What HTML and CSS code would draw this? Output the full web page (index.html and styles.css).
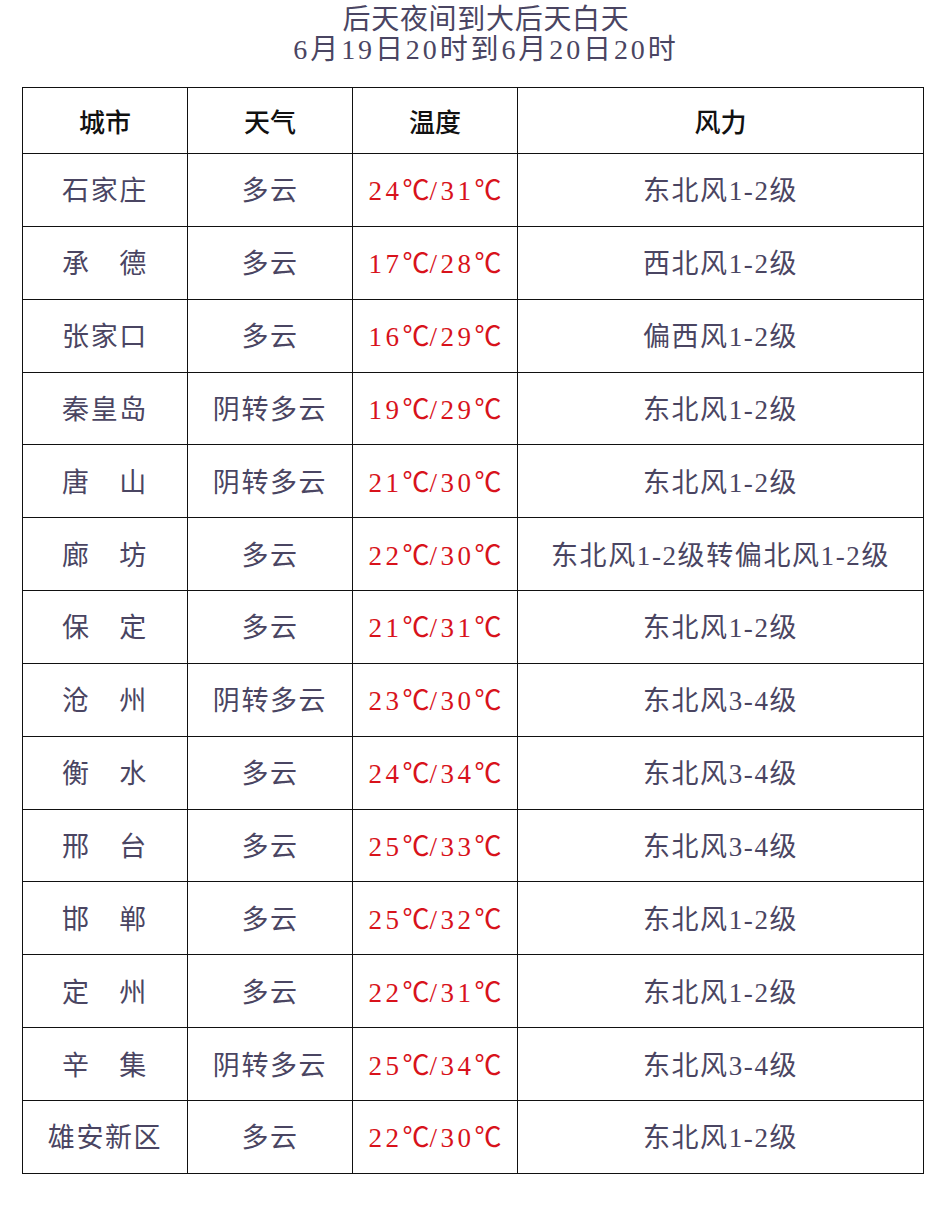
FILE: index.html
```html
<!DOCTYPE html>
<html lang="zh-CN">
<head>
<meta charset="utf-8">
<title>后天夜间到大后天白天</title>
<link rel="stylesheet" href="styles.css">
</head>
<body>
<div class="page">
  <h1 class="title">
    <span class="line l1">后天夜间到大后天白天</span>
    <span class="line l2">6月19日20时到6月20日20时</span>
  </h1>
  <table class="forecast">
    <colgroup>
      <col class="c-city"><col class="c-weather"><col class="c-temp"><col class="c-wind">
    </colgroup>
    <thead>
      <tr><th>城市</th><th>天气</th><th>温度</th><th>风力</th></tr>
    </thead>
    <tbody>
      <tr><td>石家庄</td><td>多云</td><td class="temp">24<span class="deg">℃</span>/31<span class="deg">℃</span></td><td>东北风1-2级</td></tr>
      <tr><td>承　德</td><td>多云</td><td class="temp">17<span class="deg">℃</span>/28<span class="deg">℃</span></td><td>西北风1-2级</td></tr>
      <tr><td>张家口</td><td>多云</td><td class="temp">16<span class="deg">℃</span>/29<span class="deg">℃</span></td><td>偏西风1-2级</td></tr>
      <tr><td>秦皇岛</td><td>阴转多云</td><td class="temp">19<span class="deg">℃</span>/29<span class="deg">℃</span></td><td>东北风1-2级</td></tr>
      <tr><td>唐　山</td><td>阴转多云</td><td class="temp">21<span class="deg">℃</span>/30<span class="deg">℃</span></td><td>东北风1-2级</td></tr>
      <tr><td>廊　坊</td><td>多云</td><td class="temp">22<span class="deg">℃</span>/30<span class="deg">℃</span></td><td>东北风1-2级转偏北风1-2级</td></tr>
      <tr><td>保　定</td><td>多云</td><td class="temp">21<span class="deg">℃</span>/31<span class="deg">℃</span></td><td>东北风1-2级</td></tr>
      <tr><td>沧　州</td><td>阴转多云</td><td class="temp">23<span class="deg">℃</span>/30<span class="deg">℃</span></td><td>东北风3-4级</td></tr>
      <tr><td>衡　水</td><td>多云</td><td class="temp">24<span class="deg">℃</span>/34<span class="deg">℃</span></td><td>东北风3-4级</td></tr>
      <tr><td>邢　台</td><td>多云</td><td class="temp">25<span class="deg">℃</span>/33<span class="deg">℃</span></td><td>东北风3-4级</td></tr>
      <tr><td>邯　郸</td><td>多云</td><td class="temp">25<span class="deg">℃</span>/32<span class="deg">℃</span></td><td>东北风1-2级</td></tr>
      <tr><td>定　州</td><td>多云</td><td class="temp">22<span class="deg">℃</span>/31<span class="deg">℃</span></td><td>东北风1-2级</td></tr>
      <tr><td>辛　集</td><td>阴转多云</td><td class="temp">25<span class="deg">℃</span>/34<span class="deg">℃</span></td><td>东北风3-4级</td></tr>
      <tr><td>雄安新区</td><td>多云</td><td class="temp">22<span class="deg">℃</span>/30<span class="deg">℃</span></td><td>东北风1-2级</td></tr>
    </tbody>
  </table>
</div>
</body>
</html>
```

FILE: styles.css
```css
html, body {
  margin: 0;
  padding: 0;
  background: #ffffff;
}

.page {
  width: 942px;
  padding-top: 5px;
  font-family: "Liberation Serif", "Noto Sans CJK SC", serif;
  color: #4a4562;
}

.title {
  margin: 0;
  padding-left: 30px;
  font-weight: normal;
  font-size: 28px;
  line-height: 30px;
  text-align: center;
  color: #4a4562;
}

.title .line {
  display: block;
}

.title .l1 { letter-spacing: 0.7px; }
.title .l2 { letter-spacing: 2.9px; }

.forecast {
  margin: 22px 0 0 22px;
  width: 901px;
  border-collapse: collapse;
  table-layout: fixed;
  font-size: 27px;
}

.c-city, .c-weather, .c-temp { width: 165px; }
.c-wind { width: 406px; }

.forecast th,
.forecast td {
  border: 1px solid #111111;
  padding: 0;
  text-align: center;
  vertical-align: middle;
  white-space: nowrap;
}

.forecast thead tr { height: 66px; }
.forecast tbody tr { height: 72.85px; }

.forecast th {
  color: #111111;
  font-family: "Noto Sans CJK SC", sans-serif;
  font-weight: 500;
  font-size: 26px;
}

.forecast td {
  letter-spacing: 1.6px;
  padding-bottom: 2px;
}

.forecast td.temp {
  color: #d8121b;
  letter-spacing: 3.5px;
}

.forecast td.temp .deg {
  display: inline-block;
  width: 27px;
  text-align: center;
  letter-spacing: 0;
  font-size: 27px;
}
```
